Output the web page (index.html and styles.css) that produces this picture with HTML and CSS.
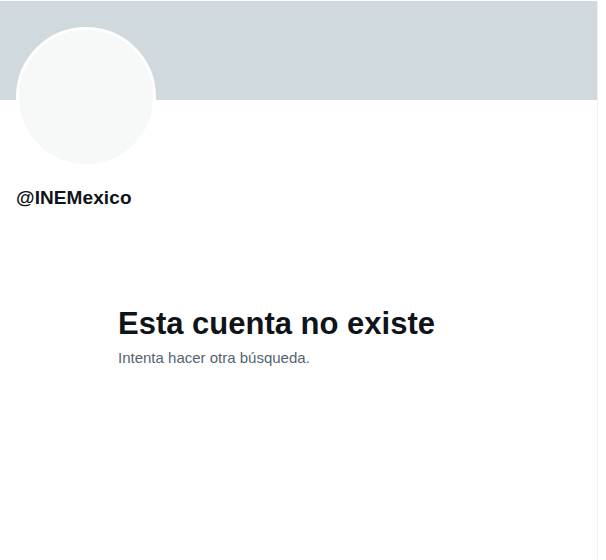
FILE: index.html
```html
<!DOCTYPE html>
<html lang="es">
<head>
    <meta charset="UTF-8">
    <meta name="viewport" content="width=device-width, initial-scale=1.0">
    <title>@INEMexico</title>
    <link rel="stylesheet" href="styles.css">
</head>
<body>
    <div class="profile-column">
        <div class="banner"></div>
        <div class="profile-head">
            <div class="avatar"></div>
            <div class="handle">@INEMexico</div>
        </div>
        <div class="empty-state">
            <h2>Esta cuenta no existe</h2>
            <p>Intenta hacer otra búsqueda.</p>
        </div>
    </div>
</body>
</html>
```

FILE: styles.css
```css
* {
    margin: 0;
    padding: 0;
    box-sizing: border-box;
}

body {
    background-color: #fff;
    font-family: 'Liberation Sans', Arial, sans-serif;
    color: #0f1419;
}

.profile-column {
    width: 598px;
    min-height: 560px;
    border-right: 1px solid #eff3f4;
    padding-top: 1px;
}

.banner {
    height: 99px;
    background-color: #cfd9de;
}

.profile-head {
    padding: 0 16px;
}

.avatar {
    width: 140px;
    height: 140px;
    margin-top: -73px;
    border-radius: 50%;
    background-color: #f7f9f9;
    border: 3px solid #fff;
}

.handle {
    margin-top: 20px;
    font-size: 19px;
    font-weight: bold;
    line-height: 22px;
    letter-spacing: 0.1px;
}

.empty-state {
    margin: 97px 0 0 118px;
    max-width: 360px;
}

.empty-state h2 {
    font-size: 31px;
    font-weight: bold;
    line-height: 36px;
}

.empty-state p {
    margin-top: 6px;
    font-size: 15px;
    line-height: 20px;
    color: #536471;
}
```
